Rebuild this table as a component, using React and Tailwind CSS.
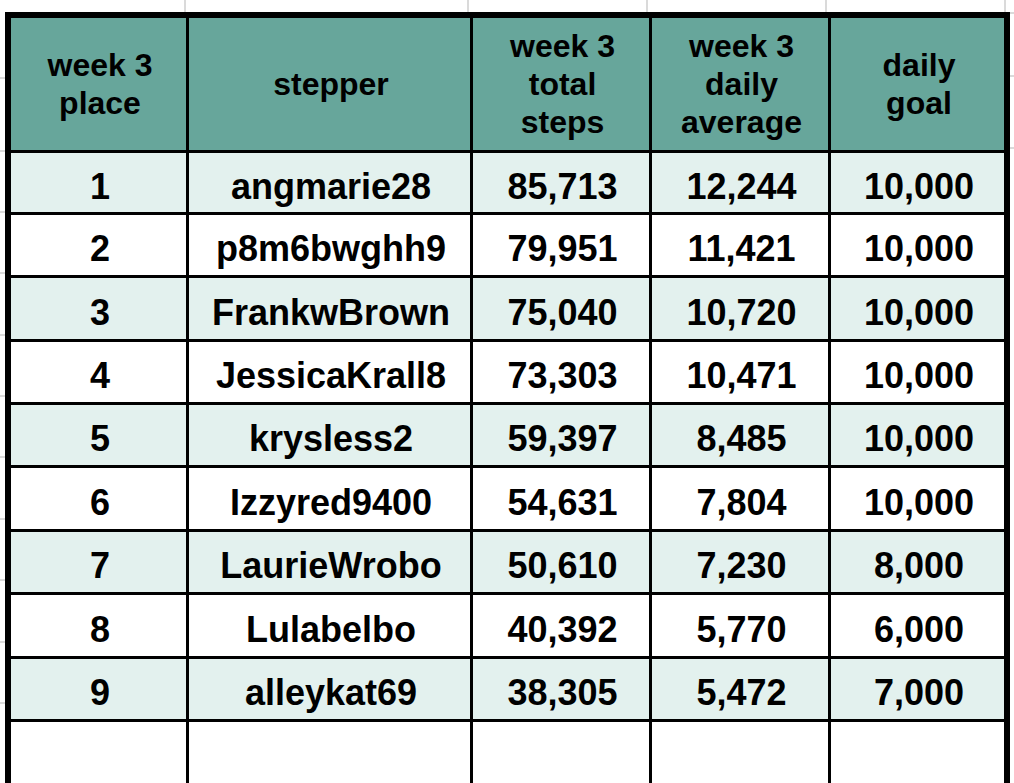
import React from "react";

const rows = [
  ["1", "angmarie28", "85,713", "12,244", "10,000"],
  ["2", "p8m6bwghh9", "79,951", "11,421", "10,000"],
  ["3", "FrankwBrown", "75,040", "10,720", "10,000"],
  ["4", "JessicaKrall8", "73,303", "10,471", "10,000"],
  ["5", "krysless2", "59,397", "8,485", "10,000"],
  ["6", "Izzyred9400", "54,631", "7,804", "10,000"],
  ["7", "LaurieWrobo", "50,610", "7,230", "8,000"],
  ["8", "Lulabelbo", "40,392", "5,770", "6,000"],
  ["9", "alleykat69", "38,305", "5,472", "7,000"],
];

const heads = [
  ["week 3", "place"],
  ["stepper"],
  ["week 3", "total", "steps"],
  ["week 3", "daily", "average"],
  ["daily", "goal"],
];

// row content heights, so the lines land where the sheet puts them
const rowH = ["h-[59px]", "h-[60px]", "h-[61px]", "h-[60px]", "h-[60px]", "h-[61px]", "h-[60px]", "h-[61px]", "h-[60px]"];

const cols = "grid-cols-[175px_281px_176px_176px_173px]";

const Leaderboard = () => {
  return (
    <div className="w-[1014px] h-[783px] overflow-hidden bg-white font-['Liberation_Sans',Arial,sans-serif] font-bold text-black">
      {/* spreadsheet gridlines above the table */}
      <div className="flex h-[12px]">
        <div className="w-[186px] border-r-[2px] border-[#dadada]"></div>
        <div className="w-[283px] border-r-[2px] border-[#dadada]"></div>
        <div className="w-[179px] border-r-[2px] border-[#dadada]"></div>
        <div className="w-[179px] border-r-[2px] border-[#dadada]"></div>
        <div className="w-[179px] border-r-[2px] border-[#dadada]"></div>
      </div>
      <div className="flex">
        <div className="w-[5px] flex flex-col">
          <div className="h-[67px] border-b-[2px] border-[#dadada]"></div>
          <div className="h-[73px] border-b-[2px] border-[#dadada]"></div>
          <div className="h-[61px] border-b-[2px] border-[#dadada]"></div>
          <div className="h-[61px] border-b-[2px] border-[#dadada]"></div>
          <div className="h-[62px] border-b-[2px] border-[#dadada]"></div>
          <div className="h-[61px] border-b-[2px] border-[#dadada]"></div>
          <div className="h-[61px] border-b-[2px] border-[#dadada]"></div>
          <div className="h-[62px] border-b-[2px] border-[#dadada]"></div>
          <div className="h-[61px] border-b-[2px] border-[#dadada]"></div>
          <div className="h-[62px] border-b-[2px] border-[#dadada]"></div>
          <div className="h-[61px] border-b-[2px] border-[#dadada]"></div>
        </div>
        <div className="border-[6px] border-black bg-black">
          <div className={`grid ${cols} gap-[3px]`}>
            {heads.map((h, i) => (
              <div
                key={i}
                className="h-[132px] pl-[3px] bg-[#67a69b] flex flex-col items-center justify-center text-[32px] leading-[38px]"
              >
                {h.map((l, j) => (
                  <span key={j}>{l}</span>
                ))}
              </div>
            ))}
            {rows.map((r, i) =>
              r.map((c, j) => (
                <div
                  key={i + "-" + j}
                  className={`${rowH[i]} ${i % 2 === 0 ? "bg-[#e3f1ee]" : "bg-white"} pt-[8px] pl-[3px] flex items-center justify-center text-[36px] leading-none`}
                >
                  {c}
                </div>
              ))
            )}
            {[0, 1, 2, 3, 4].map((k) => (
              <div key={"e" + k} className="h-[80px] bg-white"></div>
            ))}
          </div>
        </div>
        <div className="w-[4px] flex flex-col">
          <div className="h-[1px] border-b-[2px] border-[#dadada]"></div>
          <div className="h-[63px] border-b-[2px] border-[#dadada]"></div>
          <div className="h-[72px] border-b-[2px] border-[#dadada]"></div>
        </div>
      </div>
    </div>
  );
};

export default Leaderboard;
